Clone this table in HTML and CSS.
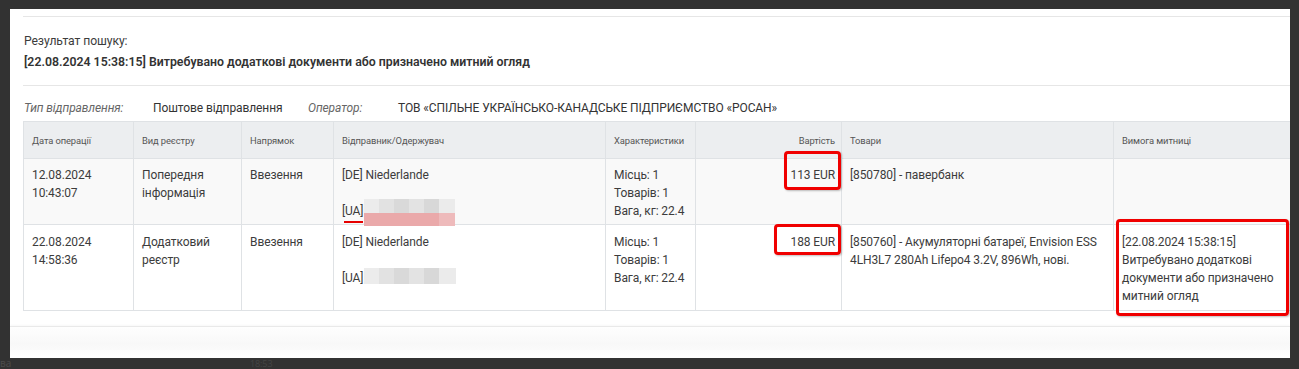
FILE: index.html
```html
<!DOCTYPE html>
<html lang="uk">
<head>
<meta charset="utf-8">
<title>Результат пошуку</title>
<link rel="stylesheet" href="styles.css">
</head>
<body>
<div class="modal">
  <div class="modal-top"></div>
  <div class="modal-body">
    <div class="result-label">Результат пошуку:</div>
    <div class="result-status">[22.08.2024 15:38:15] Витребувано додаткові документи або призначено митний огляд</div>
    <div class="divider"></div>
    <div class="meta">
      <span class="meta-label">Тип відправлення:</span>
      <span class="meta-value">Поштове відправлення</span>
      <span class="meta-label">Оператор:</span>
      <span class="meta-value">ТОВ «СПІЛЬНЕ УКРАЇНСЬКО-КАНАДСЬКЕ ПІДПРИЄМСТВО «РОСАН»</span>
    </div>
    <table class="ops">
      <colgroup>
        <col class="c-date"><col class="c-type"><col class="c-dir"><col class="c-party">
        <col class="c-char"><col class="c-cost"><col class="c-goods"><col class="c-req">
      </colgroup>
      <thead>
        <tr>
          <th>Дата операції</th>
          <th>Вид реєстру</th>
          <th>Напрямок</th>
          <th>Відправник/Одержувач</th>
          <th>Характеристики</th>
          <th class="num">Вартість</th>
          <th>Товари</th>
          <th>Вимога митниці</th>
        </tr>
      </thead>
      <tbody>
        <tr class="odd">
          <td>12.08.2024<br>10:43:07</td>
          <td>Попередня<br>інформація</td>
          <td>Ввезення</td>
          <td>[DE] Niederlande<br><br><span class="party"><span class="ua underlined">[UA]</span><span class="redact redact-1"><span class="redact-grey"></span><span class="redact-pink"></span></span></span></td>
          <td>Місць: 1<br>Товарів: 1<br>Вага, кг: 22.4</td>
          <td class="num mark-cell">113 EUR<span class="mark mark-1"></span></td>
          <td>[850780] - павербанк</td>
          <td></td>
        </tr>
        <tr class="tall">
          <td>22.08.2024<br>14:58:36</td>
          <td>Додатковий<br>реєстр</td>
          <td>Ввезення</td>
          <td>[DE] Niederlande<br><br><span class="party"><span class="ua">[UA]</span><span class="redact redact-2"><span class="redact-grey"></span></span></span></td>
          <td>Місць: 1<br>Товарів: 1<br>Вага, кг: 22.4</td>
          <td class="num mark-cell">188 EUR<span class="mark mark-2"></span></td>
          <td>[850760] - Акумуляторні батареї, Envision ESS 4LH3L7 280Ah Lifepo4 3.2V, 896Wh, нові.</td>
          <td class="mark-cell">[22.08.2024 15:38:15] Витребувано додаткові документи або призначено митний огляд<span class="mark mark-3"></span></td>
        </tr>
      </tbody>
    </table>
  </div>
  <div class="modal-footer"></div>
</div>
<div class="backdrop-text">
  <span class="bt-1">ва</span>
  <span class="bt-2">18:53</span>
</div>
</body>
</html>
```

FILE: styles.css
```css
html, body {
  margin: 0;
  padding: 0;
}

body {
  width: 1299px;
  height: 369px;
  overflow: hidden;
  background: #323232;
  font-family: Roboto, "Noto Sans", "DejaVu Sans", sans-serif;
  color: #3c3c3c;
  font-size: 12px;
  letter-spacing: -0.1px;
}

.modal {
  margin: 9px 0 0 10px;
  width: 1280px;
  height: 349px;
  background: #ffffff;
  overflow: hidden;
  display: flex;
  flex-direction: column;
}

.modal-top {
  height: 7px;
  margin-left: 13px;
  border-bottom: 1px solid #e6e6e6;
  flex: none;
}

.modal-body {
  padding-left: 13px;
  flex: none;
}

.result-label {
  margin-top: 14px;
  line-height: 20px;
  padding-left: 1px;
  font-size: 12.2px;
}

.result-status {
  margin-top: 1px;
  line-height: 20px;
  font-weight: 600;
  font-size: 12.3px;
  letter-spacing: 0;
  color: #333;
  padding-left: 1px;
}

.divider {
  margin-top: 13px;
  border-top: 1px solid #e6e6e6;
}

.meta {
  margin-top: 12px;
  display: grid;
  grid-template-columns: 129px 155px 90px auto;
  line-height: 20px;
  padding-left: 1px;
  font-size: 12px;
}

.meta-label {
  font-style: italic;
  color: #666;
}

.meta-value {
  color: #333;
}

.ops {
  margin-top: 3px;
  border-collapse: collapse;
  table-layout: fixed;
  width: 1290px;
}

.c-date { width: 110px; }
.c-type { width: 108px; }
.c-dir { width: 92px; }
.c-party { width: 272px; }
.c-char { width: 90px; }
.c-cost { width: 146px; }
.c-goods { width: 272px; }
.c-req { width: 200px; }

.ops th {
  background: #eceef0;
  font-weight: 400;
  font-size: 9.4px;
  letter-spacing: -0.1px;
  color: #555;
  text-align: left;
  padding: 12px 8px 11px 8px;
  line-height: 13px;
  border: 1px solid #dfe2e5;
  white-space: nowrap;
}

.ops td {
  vertical-align: top;
  padding: 7px 8px 4px 8px;
  line-height: 18px;
  border: 1px solid #dfe2e5;
  color: #3c3c3c;
}

.ops tr.tall td {
  padding-top: 8px;
  padding-bottom: 5px;
}

.ops .num {
  text-align: right;
  padding-right: 6px;
}

.ops tr.odd td {
  background: #f9f9f9;
}

.mark-cell {
  position: relative;
}

.mark {
  position: absolute;
  border: 3px solid #f00000;
  border-radius: 4px;
  box-shadow: 1px 1px 2px rgba(0, 0, 0, 0.25);
  box-sizing: border-box;
}

.mark-1 { left: 88px; top: -8px; width: 57px; height: 39px; }
.mark-2 { left: 78px; top: -1px; width: 67px; height: 31px; }
.mark-3 { left: 2px; top: -6px; width: 173px; height: 97px; }

.party {
  position: relative;
  display: inline-block;
}

.ua {
  position: relative;
}

.ua.underlined::after {
  content: "";
  position: absolute;
  left: 2px;
  right: 0;
  top: 17px;
  height: 2px;
  background: #e60000;
}

.redact {
  position: absolute;
  left: 22px;
  display: flex;
  flex-direction: column;
}

.redact-1 { top: -3px; width: 91px; height: 27px; }
.redact-2 { top: -1px; width: 92px; height: 16px; }

.redact-grey {
  flex: 1;
  background: linear-gradient(to right,
    #ececec 0 15px, #e2e2e2 15px 30px, #d9d9d9 30px 45px,
    #e3e3e3 45px 60px, #d8d8d8 60px 75px, #ebebeb 75px 100%);
}

.redact-pink {
  height: 13px;
  background: linear-gradient(to right,
    #eaa9aa 0 75px, #eebabb 75px 100%);
}

.modal-footer {
  margin-top: 15px;
  flex: 1;
  border-top: 1px solid #e9e9e9;
  background: linear-gradient(to bottom, #fefefe 0, #f8f8f8 55%, #fefefe 100%);
  box-shadow: 0 -1px 2px rgba(0, 0, 0, 0.03);
}

.backdrop-text {
  display: flex;
  align-items: flex-end;
  height: 11px;
  font-family: "Open Sans", sans-serif;
  font-size: 10px;
  line-height: 11px;
  color: #4c4c4c;
}

.bt-1 { width: 250px; }
.bt-2 { font-size: 9px; color: #454545; }
```
